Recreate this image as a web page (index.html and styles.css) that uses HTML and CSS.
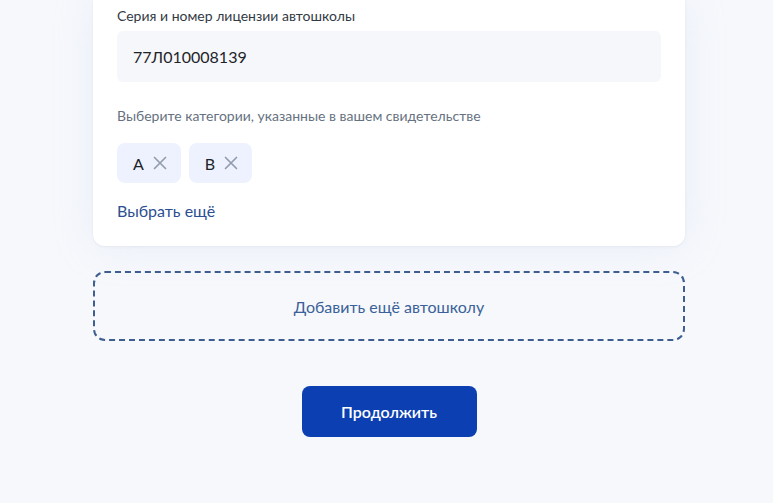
FILE: index.html
```html
<!DOCTYPE html>
<html lang="ru">
<head>
<meta charset="utf-8">
<title>Автошкола</title>
<link rel="stylesheet" href="styles.css">
</head>
<body>
<main class="page">
  <section class="card">
    <label class="field-label">Серия и номер лицензии автошколы</label>
    <div class="input">77Л010008139</div>
    <p class="hint">Выберите категории, указанные в вашем свидетельстве</p>
    <div class="chips">
      <span class="chip">A <svg class="x" viewBox="0 0 14 14" width="14" height="14"><path d="M1.5 1.5 L12.5 12.5 M12.5 1.5 L1.5 12.5" stroke="#939cad" stroke-width="1.7" fill="none" stroke-linecap="round"/></svg></span>
      <span class="chip">B <svg class="x" viewBox="0 0 14 14" width="14" height="14"><path d="M1.5 1.5 L12.5 12.5 M12.5 1.5 L1.5 12.5" stroke="#939cad" stroke-width="1.7" fill="none" stroke-linecap="round"/></svg></span>
    </div>
    <a class="more" href="#">Выбрать ещё</a>
  </section>
  <button class="add" type="button">Добавить ещё автошколу</button>
  <div class="actions">
    <button class="primary" type="button">Продолжить</button>
  </div>
</main>
</body>
</html>
```
FILE: styles.css
```css
html, body {
  margin: 0;
  padding: 0;
  background: #f6f8fc;
  font-family: Lato, "Noto Sans", sans-serif;
  color: #1a1a1a;
}
.page {
  width: 592px;
  margin-left: 93px;
  display: flex;
  flex-direction: column;
}
.card {
  background: #ffffff;
  border-radius: 0 0 12px 12px;
  padding: 6px 24px 25px;
  box-shadow: 0 0 40px rgba(190, 205, 230, 0.22), 0 1px 3px rgba(30, 50, 90, 0.06);
  display: flex;
  flex-direction: column;
  align-items: flex-start;
}
.field-label {
  font-size: 14px;
  line-height: 20px;
  color: #333a44;
  margin-bottom: 5px;
}
.input {
  align-self: stretch;
  height: 51px;
  box-sizing: border-box;
  background: #f5f7fa;
  border-radius: 6px;
  padding: 0 16px;
  display: flex;
  align-items: center;
  font-size: 16px;
  color: #1f2329;
}
.hint {
  margin: 24px 0 0;
  font-size: 14px;
  line-height: 20px;
  color: #66727f;
}
.chips {
  display: flex;
  gap: 8px;
  margin-top: 17px;
}
.chip {
  height: 40px;
  box-sizing: border-box;
  padding: 0 14px 0 16px;
  background: #edf2fe;
  border-radius: 8px;
  display: flex;
  align-items: center;
  gap: 9px;
  font-size: 16px;
  color: #1f2329;
}
.chip .x {
  display: block;
}
.more {
  margin-top: 18px;
  font-size: 16px;
  line-height: 20px;
  color: #2c4f91;
  text-decoration: none;
}
.add {
  margin-top: 25px;
  height: 70px;
  border: 2px dashed #3d5e8f;
  border-radius: 12px;
  background: transparent;
  font-family: inherit;
  font-size: 16px;
  color: #3b6298;
  cursor: pointer;
}
.actions {
  display: flex;
  justify-content: center;
  margin-top: 45px;
}
.primary {
  width: 175px;
  height: 51px;
  border: 0;
  border-radius: 8px;
  background: #0c40b2;
  color: #ffffff;
  font-family: inherit;
  font-size: 16px;
  font-weight: 600;
  cursor: pointer;
}
```
